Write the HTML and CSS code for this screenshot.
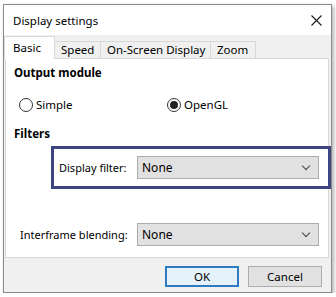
FILE: index.html
```html
<!DOCTYPE html>
<html lang="en">
<head>
  <meta charset="UTF-8">
  <link rel="stylesheet" href="styles.css">
  <title>Display settings</title>
</head>
<body>
  <div class="window">
    <div class="titlebar">
      <span class="title">Display settings</span>
      <svg class="close" width="11" height="11" viewBox="0 0 11 11">
        <path d="M0.5 0.5 L10.5 10.5 M10.5 0.5 L0.5 10.5" stroke="#1a1a1a" stroke-width="1.1"/>
      </svg>
    </div>

    <div class="body">
      <div class="tabs">
        <div class="tab active">Basic</div>
        <div class="tab speed">Speed</div>
        <div class="tab osd">On-Screen Display</div>
        <div class="tab zoom">Zoom</div>
      </div>

      <div class="panel">
        <div class="heading">Output module</div>
        <div class="radios">
          <label class="radio"><span class="dot"></span>Simple</label>
          <label class="radio checked"><span class="dot"></span>OpenGL</label>
        </div>
        <div class="heading filters">Filters</div>

        <div class="highlight">
          <span class="label">Display filter:</span>
          <div class="select">None<span class="chev"></span></div>
        </div>

        <div class="row">
          <span class="label">Interframe blending:</span>
          <div class="select">None<span class="chev"></span></div>
        </div>
      </div>

      <div class="footer">
        <button class="btn default">OK</button>
        <button class="btn">Cancel</button>
      </div>
    </div>
  </div>
</body>
</html>
```

FILE: styles.css
```css
body {
  margin: 0;
  background-color: #fff;
  font-family: "Noto Sans", "Open Sans", sans-serif;
  font-size: 11px;
  color: #000;
}

.window {
  margin: 4px 0 0 3px;
  width: 327px;
  height: 287px;
  border: 1px solid #8a8a8a;
  box-shadow: 2px 2px 4px rgba(0, 0, 0, 0.3);
  display: flex;
  flex-direction: column;
}

.titlebar {
  height: 30px;
  background-color: #fff;
  display: flex;
  align-items: center;
  justify-content: space-between;
  padding: 0 9px 0 9px;
  font-size: 11.5px;
}

.close {
  margin-top: 1px;
}

.body {
  flex: 1;
  background-color: #f0f0f0;
  display: flex;
  flex-direction: column;
}

.tabs {
  display: flex;
  align-items: flex-end;
  height: 23px;
  white-space: nowrap;
  font-size: 11.5px;
}

.tab {
  box-sizing: border-box;
  height: 17px;
  line-height: 16px;
  border: 1px solid #d9d9d9;
  border-bottom: none;
  border-left: none;
  padding-left: 6px;
  background-color: #f0f0f0;
}

.tab.active {
  width: 51px;
  height: 23px;
  line-height: 21px;
  background-color: #fff;
  border-left: 1px solid #d9d9d9;
  padding-left: 8px;
  position: relative;
  z-index: 1;
  margin-bottom: -1px;
}

.tab.speed {
  width: 46px;
}

.tab.osd {
  width: 110px;
  padding-left: 6px;
}

.tab.zoom {
  width: 45px;
}

.panel {
  margin: 0 2px 0 1px;
  height: 198px;
  background-color: #fff;
  border: 1px solid #d9d9d9;
  padding: 0 0 0 8px;
}

.heading {
  font-weight: bold;
  font-size: 11.5px;
  margin-top: 6px;
  line-height: 16px;
}

.radios {
  display: flex;
  margin-top: 16px;
  padding-left: 5px;
  font-size: 11.5px;
}

.radio {
  display: flex;
  align-items: center;
  width: 148px;
  line-height: 16px;
}

.dot {
  width: 12px;
  height: 12px;
  border: 1px solid #333;
  border-radius: 50%;
  margin-right: 3px;
  display: flex;
  align-items: center;
  justify-content: center;
}

.radio.checked .dot::after {
  content: "";
  width: 8px;
  height: 8px;
  border-radius: 50%;
  background-color: #222;
}

.filters {
  margin-top: 13px;
}

.highlight {
  margin: 4px 0 0 37px;
  width: 269px;
  height: 37px;
  border: 3px solid #3f4483;
  display: flex;
  align-items: center;
  padding-left: 5px;
}

.highlight .label {
  width: 78px;
  white-space: nowrap;
}

.row {
  display: flex;
  align-items: center;
  margin-top: 34px;
  padding-left: 6px;
}

.row .label {
  width: 117px;
  white-space: nowrap;
}

.select {
  width: 176px;
  height: 21px;
  line-height: 21px;
  background-color: #e1e1e1;
  border: 1px solid #adadad;
  padding-left: 4px;
  font-size: 12px;
  position: relative;
}

.chev {
  position: absolute;
  right: 9px;
  top: 6px;
  width: 5px;
  height: 5px;
  border-right: 1px solid #444;
  border-bottom: 1px solid #444;
  transform: rotate(45deg);
}

.footer {
  flex: 1;
  display: flex;
  justify-content: flex-end;
  align-items: flex-start;
  padding: 8px 9px 0 0;
  gap: 9px;
}

.btn {
  font-family: "Noto Sans", "Open Sans", sans-serif;
  font-size: 11.5px;
  width: 74px;
  height: 21px;
  padding: 0;
  background-color: #e1e1e1;
  border: 1px solid #adadad;
  color: #000;
}

.btn.default {
  border: 2px solid #2f7bbf;
  background-color: #e5f1fb;
}
```
